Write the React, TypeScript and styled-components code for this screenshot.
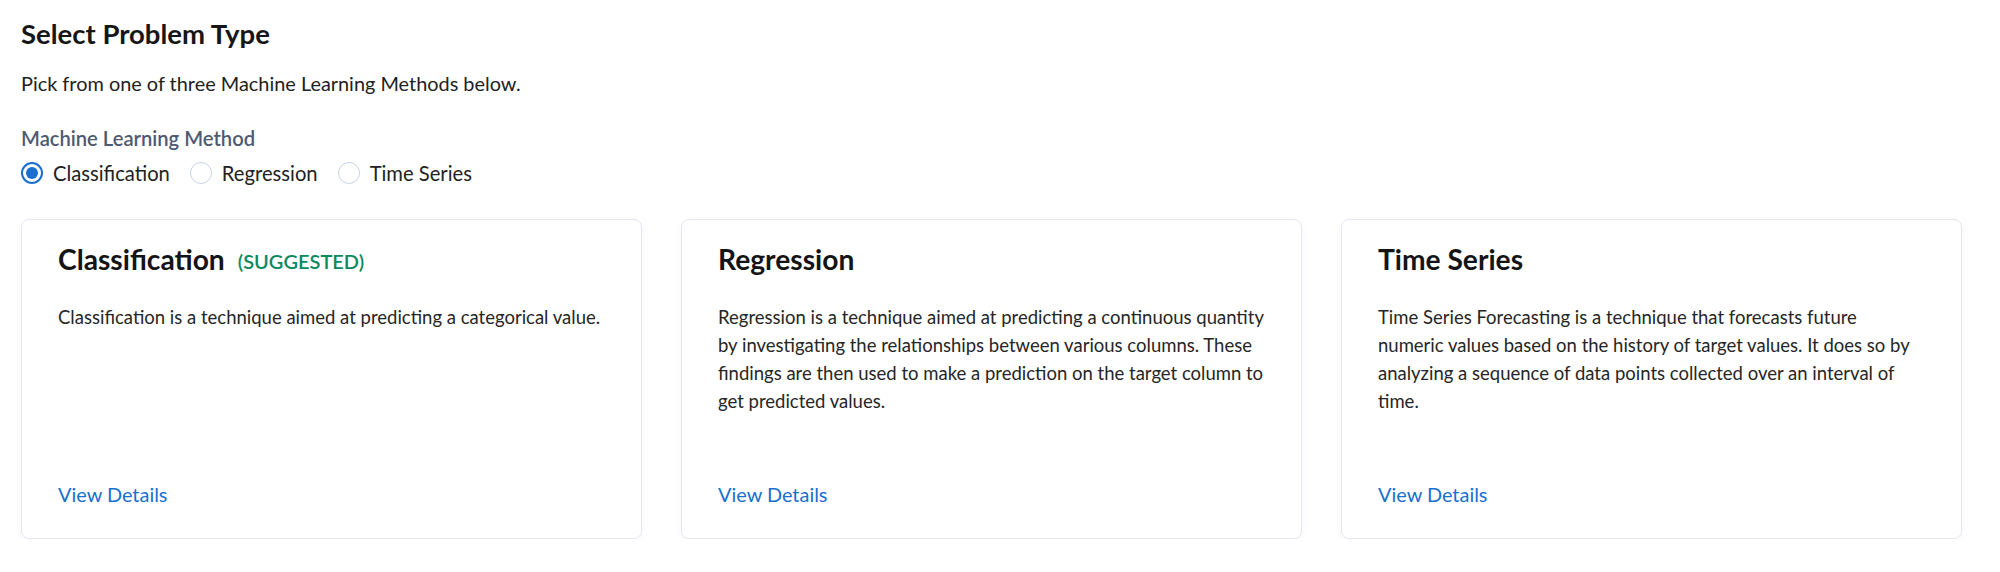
import React, { useState } from "react";
import styled, { createGlobalStyle } from "styled-components";

const GlobalStyle = createGlobalStyle`
  body {
    margin: 0;
    background: #ffffff;
    font-family: Lato, "Open Sans", sans-serif;
  }
`;

const Page = styled.div`
  padding: 17px 38px 0 21px;
`;

const Title = styled.h1`
  margin: 0;
  font-size: 27.5px;
  line-height: 33px;
  font-weight: 700;
  color: #161616;
`;

const Subtitle = styled.p`
  margin: 21px 0 0 0;
  font-size: 19.9px;
  line-height: 24px;
  color: #222222;
`;

const FieldLabel = styled.div`
  margin-top: 31px;
  font-size: 20.2px;
  line-height: 24px;
  font-weight: 600;
  color: #4e5a72;
`;

const RadioGroup = styled.div`
  display: flex;
  align-items: center;
  gap: 20px;
  margin-top: 11px;
`;

const RadioItem = styled.label`
  display: flex;
  align-items: center;
  gap: 10px;
  font-size: 20.2px;
  line-height: 24px;
  color: #222222;
  cursor: pointer;
`;

const HiddenInput = styled.input`
  display: none;
`;

const RadioCircle = styled.span<{ $checked: boolean }>`
  box-sizing: border-box;
  width: 22px;
  height: 22px;
  border-radius: 50%;
  border: ${(p) => (p.$checked ? "2px solid #1a6fcf" : "1.5px solid #c9d3e4")};
  display: flex;
  align-items: center;
  justify-content: center;

  &::after {
    content: "";
    width: 12px;
    height: 12px;
    border-radius: 50%;
    background: ${(p) => (p.$checked ? "#1a6fcf" : "transparent")};
  }
`;

const CardGrid = styled.div`
  display: grid;
  grid-template-columns: repeat(3, 1fr);
  gap: 39px;
  margin-top: 34px;
`;

const Card = styled.div`
  box-sizing: border-box;
  height: 320px;
  display: flex;
  flex-direction: column;
  padding: 22px 36px 32px 36px;
  border: 1px solid #e3e8f0;
  border-radius: 8px;
  background: #ffffff;
  box-shadow: 0 2px 8px rgba(30, 50, 90, 0.04);
`;

const CardHeader = styled.div`
  display: flex;
  align-items: baseline;
  gap: 13px;
`;

const CardTitle = styled.h2`
  margin: 0;
  font-size: 28.2px;
  line-height: 34px;
  font-weight: 700;
  color: #141414;
`;

const Suggested = styled.span`
  position: relative;
  top: -1px;
  font-size: 20px;
  font-weight: 600;
  color: #0c8a5e;
`;

const Description = styled.p`
  margin: 27px 0 0 0;
  font-size: 18.5px;
  line-height: 28px;
  color: #262626;
`;

const DetailsLink = styled.a`
  margin-top: auto;
  font-size: 19.9px;
  line-height: 24px;
  color: #1a6fcf;
  text-decoration: none;
  cursor: pointer;
`;

type Method = {
  id: string;
  name: string;
  suggested?: boolean;
  text: string;
};

const methods: Method[] = [
  {
    id: "classification",
    name: "Classification",
    suggested: true,
    text: "Classification is a technique aimed at predicting a categorical value.",
  },
  {
    id: "regression",
    name: "Regression",
    text: "Regression is a technique aimed at predicting a continuous quantity by investigating the relationships between various columns. These findings are then used to make a prediction on the target column to get predicted values.",
  },
  {
    id: "timeseries",
    name: "Time Series",
    text: "Time Series Forecasting is a technique that forecasts future numeric values based on the history of target values. It does so by analyzing a sequence of data points collected over an interval of time.",
  },
];

export default function App() {
  const [selected, setSelected] = useState("classification");

  return (
    <>
      <GlobalStyle />
      <Page>
        <Title>Select Problem Type</Title>
        <Subtitle>Pick from one of three Machine Learning Methods below.</Subtitle>
        <FieldLabel>Machine Learning Method</FieldLabel>
        <RadioGroup>
          {methods.map((m) => (
            <RadioItem key={m.id}>
              <HiddenInput
                type="radio"
                name="method"
                checked={selected === m.id}
                onChange={() => setSelected(m.id)}
              />
              <RadioCircle $checked={selected === m.id} />
              {m.name}
            </RadioItem>
          ))}
        </RadioGroup>
        <CardGrid>
          {methods.map((m) => (
            <Card key={m.id}>
              <CardHeader>
                <CardTitle>{m.name}</CardTitle>
                {m.suggested && <Suggested>(SUGGESTED)</Suggested>}
              </CardHeader>
              <Description>{m.text}</Description>
              <DetailsLink>View Details</DetailsLink>
            </Card>
          ))}
        </CardGrid>
      </Page>
    </>
  );
}
